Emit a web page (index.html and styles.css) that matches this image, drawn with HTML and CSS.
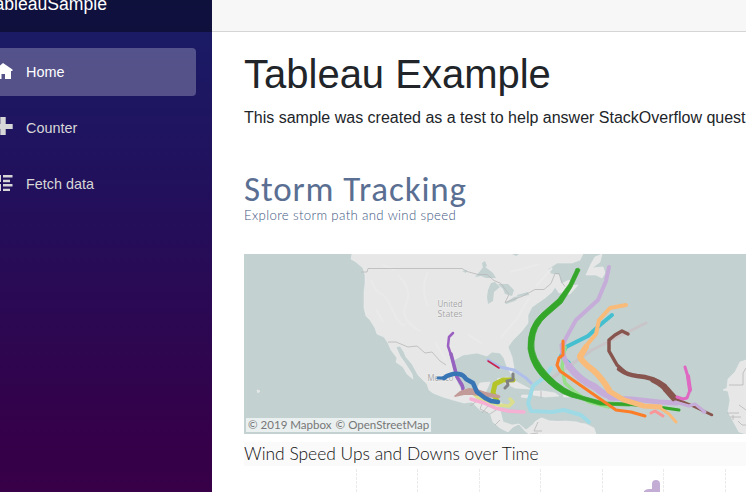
FILE: index.html
```html
<!DOCTYPE html>
<html lang="en">
<head>
<meta charset="utf-8">
<title>TableauSample</title>
<link rel="stylesheet" href="styles.css">
</head>
<body>
<div class="app">
  <aside class="sidebar">
    <div class="brand"><span>TableauSample</span></div>
    <nav class="nav">
      <a class="item active"><svg class="icon" viewBox="0 0 16 16"><path d="M6-1L-4 7h2v8h6.500v-5H8v5h6V7h1.500V5.500z"/></svg><span>Home</span></a>
      <a class="item"><svg class="icon" viewBox="0 0 16 16"><path d="M3.300-3h5.400v7h7v5h-7v6H3.300V9H-4V4h7.300z"/></svg><span>Counter</span></a>
      <a class="item"><svg class="icon" viewBox="0 0 16 16"><path d="M-3-1h7v7h-7zM-3 8h7v7h-7zM6-1h9.500v2.500H6zM6 3.800h7v2.500H6zM6 8h9.500v2.500H6zM6 12.700h7V15H6z"/></svg><span>Fetch data</span></a>
    </nav>
  </aside>
  <main class="main">
    <div class="topbar"></div>
    <div class="content">
      <h1>Tableau Example</h1>
      <p class="intro">This sample was created as a test to help answer StackOverflow question</p>
      <h2><span>Storm Tracking</span></h2>
      <p class="sub">Explore storm path and wind speed</p>
      <div class="map">
        <svg viewBox="244 254 502 180" width="502" height="180">
          <g class="land">
            <path d="M352 254L351 259 356 262 363 268 365 275V284L364 292V308L366 316 370 320 375 328 377 334 384 337 388 343 391 350 397 358 396 362 403 367 407 374 413 379 412 374 405 363 400 356 396 347 400 346 404 352 406 357 412 364 418 375 427 384 429 390 433 393 443 397 453 400 464 403 472 402 480 410 490 413 493 422 500 428 508 432 513 427 519 424 525 431 529 434 532 427 535 422 541 418 545 421 552 421 565 422 577 423 583 434H596L594 428 586 424 578 423 570 425 560 423 550 423 542 419 531 426 526 430 519 424 512 425 503 422 500 410 502 403 487 402 483 397 488 387 490 382 480 383 475 392 463 394 458 384 454 374 452 367 454 360 463 355 477 353 487 356 492 352 500 353 504 358 507 367 511 374 514 368 512 357 508 347 513 340 522 331 528 323V315L532 307 545 298 552 292 555 287 559 293 568 291 575 286 569 280 561 284 559 275 551 274 548 269 557 263 572 263 580 260 583 254Z"/>
            <path d="M542 418L552 422 565 421 577 422 590 428 596 434H529L532 427 535 422z"/>
            <path d="M595 257L602 254 600 262 592 268 603 267 605 273 602 278 596 275 586 275 591 264zM562 291l9-5 7-1-8 9-8 1zM497 379l10-2 10 5 13 7-15-1zM533 391l10 0 12 2 4 3-14 1-12-2zM563 395l7-1 1 3h-7zM522 395l7 0-1 3-7-1zM257 390l3 1-2 2z"/>
            <path d="M746 360l-6 2-5 10-7 7-1 9-4 2 5 1 2 9-2 12 5 9 6 11 7 2z"/>
          </g>
          <path class="water" d="M475 277l6-7 3-4 9 7 3 5h-10l-5-2zM488 290l3-7 4-1 5 5-6 5-1 9-5 3-1-7zM498 284l10 0 6 6-2 6-7-2-2-5zM505 303l9-6 6-1-5 5-9 3zM517 295l11-3 1 3-11 2zM482 263l3-2 2 5-4 2zM462 271l5-1-1 3zM512 254h7l-3 2z"/>
          <path class="terrain" d="M371 279q5 14 10 15t12 17 12 14M398 275q15 14 8 29t14 27M428 272q-8 16 0 34M468 334l14 10M501 337l16-18 12-21M536 286l16-18M376 309l7 13M435 342l11 18M382 265l13 5M510 272l30-8"/>
          <path class="border" d="M361 272h6l1-3.500h94l5 3 11 3 9 0 7 6 7 3 8 11-4 8 17-6 13-7 9 0 7-6 4-10 4 0 3 9 3 4M388 342l8 0 12 5 9-1 8 7 7-1 8 9 6 4M470 406l7-5 6 0-3 8 8 4M490 414l12-8M495 425l5-5M538 422l-4 9 8 0M541 391v7M530 434l8-1M729 385h14v-12l3-5M727 413h12M730 417h11M738 421l4 4 4 0M739 405l7 5M733 415v5M482 413l6-7 7-1"/>
          <g class="place"><text x="437.500" y="306.500" textLength="25" lengthAdjust="spacingAndGlyphs">United</text><text x="437.500" y="316.500" textLength="25" lengthAdjust="spacingAndGlyphs">States</text><text x="427.500" y="380.500" textLength="26" lengthAdjust="spacingAndGlyphs">Mexico</text></g>
          <g class="storm">
            <path stroke="#c8c4c7" stroke-width="3" d="M646 323L626 333 592 350 552 378"/>
            <path stroke="#43bfd0" stroke-width="4" d="M612 315L600 325 588 336 566 347 561 356 569 363"/>
            <path stroke="#98df8a" stroke-width="3.500" d="M565 347L562 368 565 383 575 392 589 402 609 407"/>
            <path stroke="#9c60c2" stroke-width="2.500" d="M453 333L449 337 448 346 452 358 457 377 462 386 463 391"/><path stroke="#9562bf" stroke-width="3.500" d="M451 354l6 23 5 8 1 3"/>
            <path stroke="#b0bfea" stroke-width="3" d="M488 360l12 7 14 3 12 8 5 5"/>
            <path stroke="#ca214b" stroke-width="1.500" d="M488 361l11 7"/>
            <path stroke="#dbdf8d" stroke-width="3.500" d="M472 391q5 9 15 10l12 4 10 1 4-4-3-3"/>
            <path stroke="#b4c429" stroke-width="5" d="M513 380L503 380 495 384 493 393 497 401"/>
            <path stroke="#828282" stroke-width="3" d="M513 374l0 6-6 1 1 4-3 3"/>
            <path fill="#c29a97" d="M454 396l6-5 9-3 8 1 9 3 13 3q3 2 0 3l-14-1-13-2-8 0-9 2z"/>
            <path stroke="#f5b0d3" stroke-width="3.500" d="M471 399l13 4 11 5 13 3 16 1"/>
            <path stroke="#3875b5" stroke-width="4.500" d="M444 378q7-5 15-4 5 1 7 5l7 4q3 7 4 9l8 6 6 3 7 1"/><path stroke="#3875b5" stroke-width="3" d="M438 378h7"/>
            <path stroke="#9edae5" stroke-width="4" d="M551 368l-5 8-13 10-5 17 3 8 21 1 12-2 17 5 8 7"/>
            <path fill="#34a629" stroke="#34a629" stroke-width=".7" d="M576 269L569 284 558 299 542 313Q527 326 528 349 531 369 548 383 562 396 579 399L600 405 630 406V403L604 402 582 396Q563 390 549 375 532 357 534 342 535 326 547 316L562 303 572 287 580 270q-1-3-4-1z"/><path stroke="#34a629" stroke-width="3" d="M630 404.500l32 3 17 2.500"/>
            <path stroke="#c6add9" stroke-width="4" d="M609 267L606 281 598 300 576 320 566 338 562 348"/><path stroke="#c6add9" stroke-width="5" d="M562 345q0 13 7 21l7 9"/><path stroke="#c6add9" stroke-width="7" d="M569 366q10 14 26 21 10 9 19 10"/><path stroke="#c6add9" stroke-width="5" d="M610 398l22 1 27 3 18 1"/>
            <path stroke="#f8bb79" stroke-width="4" d="M626 305L610 308 599 320 596 334 586 346 579 356"/><path stroke="#f8bb79" stroke-width="6" d="M586 347l-6 10q3 6 13 13 9 8 16 20"/><path stroke="#f8bb79" stroke-width="5" d="M609 391l15 9 20 6 16 1"/><path stroke="#f8bb79" stroke-width="3" d="M660 408l9 6 7 8"/>
            <path stroke="#fb7d28" stroke-width="3" d="M563 341v14l-4 3-2 7 3 6 56 39 15 2 14 4"/>
            <path stroke="#87554e" stroke-width="3.500" d="M628 334l-6-3-7 4-6 5v11l8 14 9 8"/><path stroke="#87554e" stroke-width="4.500" d="M619 369q8 6 18 7 16 1 28 10"/><path stroke="#87554e" stroke-width="5.500" d="M653 380q11 5 18 15"/><path stroke="#87554e" stroke-width="6.500" d="M666 389l8 9"/><path stroke="#87554e" stroke-width="2.500" d="M676 399l17 7 19 9"/>
            <path stroke="#df69c2" stroke-width="3" d="M685 367l3 10 2 13-3 8-4 1-6-2"/><path stroke="#df69c2" stroke-width="4" d="M688 376l2 14"/>
            <path stroke="#c6add9" stroke-width="3" d="M675 402l14 4 6-2 10 8-2 0"/>
            <path stroke="#fb9698" stroke-width="3" d="M651 413l4-2 8 5"/>
          </g>
        </svg>
        <div class="credit"><span>© 2019 Mapbox</span><span>© OpenStreetMap</span></div>
      </div>
      <div class="charthead"><span>Wind Speed Ups and Downs over Time</span></div>
      <svg class="chart" width="502" height="24" viewBox="244 468 502 24"><path class="gridline" d="M356.500 469v23M417.500 469v23M479.500 469v23M540.500 469v23M602.500 469v23M663.500 469v23M725.500 469v23"/><path fill="#c3add5" d="M644 492v-1q2-2 5-2h3v-5q0-4 4-4t4 4v8z"/></svg>
    </div>
  </main>
</div>
</body>
</html>
```
FILE: styles.css
```css
* { box-sizing: border-box; }
body { margin: 0; overflow: hidden; background: #fff; color: #212529; font-family: "Liberation Sans", Arial, sans-serif; }
.app { display: flex; width: 746px; height: 492px; overflow: hidden; }
.sidebar { flex: 0 0 212px; overflow: hidden; background: linear-gradient(180deg, #191d67 0, #22105c 190px, #350049 440px, #370047 492px); }
.brand { display: flex; justify-content: flex-end; height: 32px; padding-right: 105px; background: rgba(0,0,0,.4); color: #fff; font-size: 17.6px; line-height: 22px; white-space: nowrap; }
.brand span { margin-top: -7px; }
.nav { display: flex; flex-direction: column; gap: 8px; padding-top: 16px; }
.item { display: flex; align-items: center; gap: 13px; width: 196px; height: 48px; color: #d7d7d7; font-size: 14.4px; border-radius: 0 4px 4px 0; }
.active { background: rgba(255,255,255,.25); color: #fff; }
.icon { width: 16px; height: 16px; margin-left: -3px; fill: currentColor; overflow: visible; }
.main { flex: 1; min-width: 0; overflow: hidden; }
.topbar { height: 32px; background: #f7f7f7; border-bottom: 1px solid #d6d5d5; }
.content { display: flex; flex-direction: column; padding-left: 32px; width: 534px; }
h1, h2, p { margin: 0; font-weight: 400; white-space: nowrap; }
h1 { margin-top: 18px; font-size: 40px; line-height: 48px; }
.intro { margin-top: 8px; font-size: 16px; line-height: 24px; }
h2 { height: 34px; margin-top: 42px; color: #5a6f92; font: 400 35px/34px Carlito, Lato, sans-serif; letter-spacing: .87px; }
.sub { height: 16px; margin-top: 1px; color: #40577f; font: 300 13.2px/16px Lato, sans-serif; letter-spacing: .35px; }
.map { position: relative; height: 180px; margin-top: 31px; background: #c3d1d1; }
.map svg { display: block; }
.land { fill: #e7e7e7; stroke: #ececec; stroke-width: .6; }
.water { fill: #c3d1d1; }
.terrain { fill: none; stroke: #eaeaea; stroke-width: 2; }
.border { fill: none; stroke: #b7b7b7; stroke-width: .8; }
.place { fill: #a5a5a5; stroke: #f1f1f1; stroke-width: 1px; paint-order: stroke; font: 9px "Open Sans", sans-serif; }
.storm { fill: none; stroke-linecap: round; stroke-linejoin: round; }
.credit { position: absolute; left: 2px; bottom: 2px; display: flex; gap: 4px; height: 14px; padding: 0 2px; background: rgba(255,255,255,.65); color: #777; font: 11.55px/14px Lato, sans-serif; white-space: nowrap; }
.charthead { height: 24px; margin-top: 8px; background: #fafafa; color: #111; font: 300 17.4px/24px Lato, sans-serif; white-space: nowrap; }
.chart { display: block; margin-top: 2px; }
.gridline { stroke: #ebebeb; stroke-dasharray: 3 1; }
```
